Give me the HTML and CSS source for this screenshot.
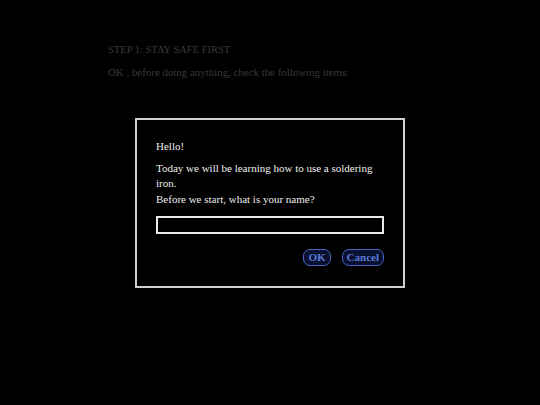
FILE: index.html
```html
<!DOCTYPE html>
<html>
<head>
<meta charset="utf-8">
<link rel="stylesheet" href="styles.css">
</head>
<body>
<div class="page">
  <p class="step">STEP 1: STAY SAFE FIRST</p>
  <p class="intro">OK , before doing anything, check the following items:</p>
</div>
<div class="overlay">
  <div class="dialog">
    <p class="hello">Hello!</p>
    <p class="msg">Today we will be learning how to use a soldering iron.<br>Before we start, what is your name?</p>
    <input class="name" type="text">
    <div class="buttons">
      <button class="btn">OK</button>
      <button class="btn">Cancel</button>
    </div>
  </div>
</div>
</body>
</html>
```
FILE: styles.css
```css
html, body {
  margin: 0;
  padding: 0;
  background: #000;
  width: 540px;
  height: 405px;
  overflow: hidden;
  font-family: "Liberation Serif", "DejaVu Serif", serif;
  font-size: 11px;
}
.page {
  padding: 43px 0 0 108px;
  color: #3a3a3a;
}
.page p {
  margin: 0 0 10px 0;
  line-height: 13px;
}
.step {
  font-size: 10.5px;
}
.intro {
  font-size: 10.9px;
}
.overlay {
  position: absolute;
  left: 135px;
  top: 118px;
}
.dialog {
  box-sizing: border-box;
  width: 270px;
  height: 170px;
  border: 2px solid #d0d0d0;
  padding: 19px 19px 19px 19px;
  color: #eee;
  display: flex;
  flex-direction: column;
}
.dialog p {
  margin: 0;
  line-height: 15.5px;
}
.hello {
  margin-bottom: 6px !important;
}
.msg {
  width: 222px;
}
.name {
  margin-top: 9px;
  box-sizing: border-box;
  width: 228px;
  height: 18px;
  background: #000;
  border: 2px solid #e8e8e8;
  padding: 0;
}
.buttons {
  display: flex;
  justify-content: flex-end;
  align-items: flex-start;
  gap: 11px;
  margin-top: 15px;
}
.btn {
  box-sizing: border-box;
  font-family: "Liberation Serif", "DejaVu Serif", serif;
  font-size: 11px;
  font-weight: bold;
  color: #5a7bd6;
  background: #0a1030;
  border: 1px solid #4a66c0;
  border-radius: 7px;
  height: 17px;
  padding: 0 4px;
  line-height: 15px;
}
```
